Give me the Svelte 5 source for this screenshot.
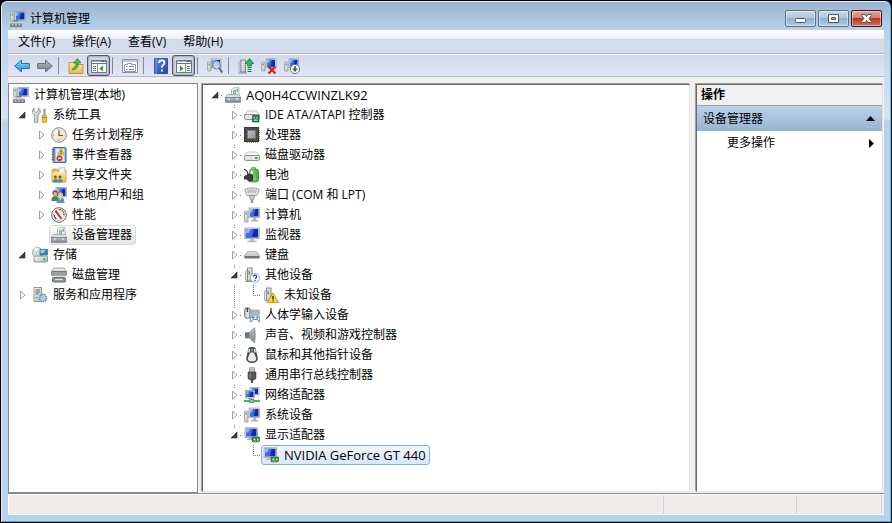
<script>
    const menus = ["文件(F)", "操作(A)", "查看(V)", "帮助(H)"];

    const tools = [
        [
            { icon: "back", label: "后退" },
            { icon: "forward", label: "前进" },
        ],
        [
            { icon: "upfolder", label: "上一级" },
            { icon: "consoletree", label: "显示控制台树", pressed: true },
        ],
        [{ icon: "properties", label: "属性" }],
        [
            { icon: "help", label: "帮助" },
            { icon: "actionpane", label: "显示操作窗格", pressed: true },
        ],
        [{ icon: "scan", label: "扫描检测硬件改动" }],
        [
            { icon: "update", label: "更新驱动程序" },
            { icon: "uninstall", label: "卸载" },
            { icon: "disable", label: "禁用" },
        ],
    ];

    let consoleTree = $state([
        {
            name: "计算机管理(本地)",
            icon: "console",
            open: true,
            children: [
                {
                    name: "系统工具",
                    icon: "tools",
                    open: true,
                    children: [
                        { name: "任务计划程序", icon: "clock", children: [] },
                        { name: "事件查看器", icon: "events", children: [] },
                        { name: "共享文件夹", icon: "shared", children: [] },
                        { name: "本地用户和组", icon: "users", children: [] },
                        { name: "性能", icon: "gauge", children: [] },
                        { name: "设备管理器", icon: "device" },
                    ],
                },
                {
                    name: "存储",
                    icon: "storage",
                    open: true,
                    children: [{ name: "磁盘管理", icon: "diskmgmt" }],
                },
                { name: "服务和应用程序", icon: "services", children: [] },
            ],
        },
    ]);

    let deviceTree = $state([
        {
            name: "AQ0H4CCWINZLK92",
            icon: "device",
            open: true,
            children: [
                { name: "IDE ATA/ATAPI 控制器", icon: "ide", children: [] },
                { name: "处理器", icon: "cpu", children: [] },
                { name: "磁盘驱动器", icon: "disk", children: [] },
                { name: "电池", icon: "battery", children: [] },
                { name: "端口 (COM 和 LPT)", icon: "port", children: [] },
                { name: "计算机", icon: "computer", children: [] },
                { name: "监视器", icon: "monitor", children: [] },
                { name: "键盘", icon: "keyboard", children: [] },
                {
                    name: "其他设备",
                    icon: "unknown",
                    open: true,
                    children: [{ name: "未知设备", icon: "warning" }],
                },
                { name: "人体学输入设备", icon: "hid", children: [] },
                { name: "声音、视频和游戏控制器", icon: "speaker", children: [] },
                { name: "鼠标和其他指针设备", icon: "mouse", children: [] },
                { name: "通用串行总线控制器", icon: "usb", children: [] },
                { name: "网络适配器", icon: "network", children: [] },
                { name: "系统设备", icon: "computer", children: [] },
                {
                    name: "显示适配器",
                    icon: "display",
                    open: true,
                    children: [{ name: "NVIDIA GeForce GT 440", icon: "display" }],
                },
            ],
        },
    ]);

    let selected = $state({
        console: "设备管理器",
        device: "NVIDIA GeForce GT 440",
    });

    // names without any Chinese are set one size up, so both scripts look alike
    const isLatin = (name) => /^[\x20-\x7e]+$/.test(name);
</script>

{#snippet screen(x, y, w, h)}
    <rect {x} {y} width={w} height={h} fill="#dfe4e8" stroke="#8d979f" stroke-width=".7" />
    <rect x={x + 1} y={y + 1} width={w - 2} height={h - 2} fill="#1029b4" />
    <path d="M{x + 1} {y + 1}h{(w - 2) * 0.65}l-2 {h - 2}h-{(w - 2) * 0.65 - 2}z" fill="#3f6be0" />
    <path d="M{x + 1} {y + 1}h{(w - 2) * 0.4}l-2 {(h - 2) / 2}h-{(w - 2) * 0.4 - 2}z" fill="#8fb4f5" />
{/snippet}

{#snippet tower(x, y, h)}
    <rect {x} {y} width="3.6" height={h} rx=".6" fill="url(#steel)" stroke="#8b9497" stroke-width=".7" />
    <rect x={x + 1} y={y + 1.5} width="1.4" height="2" fill="#3cc03a" />
{/snippet}

{#snippet drive(y)}
    <path d="M3.5 {y}h9l3 3.5H.5z" fill="#f4f5f5" stroke="#a9adae" stroke-width=".7" />
    <rect x=".5" y={y + 3.5} width="15" height="5" rx="1.6" fill="#e3e5e5" stroke="#85898a" stroke-width=".9" />
    <rect x="11" y={y + 5} width="2.6" height="2" fill="#2fbf2f" />
{/snippet}

{#snippet card()}
    <rect x="8" y="10" width="7.5" height="4.6" fill="#2f8a55" stroke="#1a6138" stroke-width=".6" />
    <path d="M9.5 11.5h2v2h-2zM13 11.5h1.5v2H13z" fill="#b9ddb9" />
    <path d="M9 15.2h5" stroke="#d7b33c" />
{/snippet}

{#snippet icon(name)}
    <svg class="icon" viewBox="0 0 16 16" width="16" height="16" fill="none" aria-hidden="true">
        {#if name === "console"}
            {@render tower(0.5, 1, 9)}
            {@render screen(5, 0.5, 10.5, 9)}
            <path d="M0 11h12v5H0z" fill="#767b7e" />
            <path d="M0 11h12v1.6H0z" fill="#c9cfd2" />
            <path d="M1.5 14h2M5 14h2M8.5 14h2" stroke="#e9edee" />
            <path d="M4 10.5V9.8h4v.7" stroke="#666" />
        {:else if name === "tools"}
            <path d="M2 1v3.4L4.2 5.4 6.2 4.4V1l2 1.8v3L6 8v7.2q-2 1.4-3.6 0V8L.6 5.8v-3z" fill="url(#steel)" stroke="#6f777a" stroke-width=".7" />
            <path d="M11.8 2h1.4v7h-1.4z" fill="#a5a9ab" stroke="#777" stroke-width=".5" />
            <rect x="10.3" y="8" width="4.4" height="7.5" rx="1.6" fill="#f8c22a" stroke="#b27c12" stroke-width=".7" />
            <path d="M10.6 10.5h3.8" stroke="#b27c12" />
        {:else if name === "clock"}
            <circle cx="8" cy="8" r="7.3" fill="#f6f3e8" stroke="#85888a" />
            <circle cx="8" cy="8" r="5.8" fill="url(#cream)" stroke="#d8d6cc" stroke-width=".6" />
            <path d="M8 3.5V8.5h4" stroke="#4d586b" stroke-width="1.2" />
            <path d="M8 2.4v1M8 12.6v1M2.4 8h1" stroke="#888" />
        {:else if name === "events"}
            <rect x="2" y=".5" width="13" height="15" rx=".8" fill="#7ba7d9" stroke="#3d6391" />
            <path d="M4.5 1.5h9v13h-9z" fill="#dbe9f8" />
            <path d="M.8 2.5h3M.8 5h3M.8 7.5h3M.8 10h3M.8 12.5h3" stroke="#58657a" />
            <path d="M10 1.5l3.2 5.8H6.8z" fill="#ffd52e" stroke="#a9820a" stroke-width=".6" />
            <path d="M10 3.5v2M10 6v.8" stroke="#222" stroke-width=".9" />
            <circle cx="8.5" cy="11.2" r="3" fill="#d9322b" />
            <path d="M7 11.2h3" stroke="#fff" stroke-width="1.2" />
        {:else if name === "shared"}
            <path d="M1 3.5L2 2h4l1 1.5h8V15H1z" fill="#e8bd4c" stroke="#b58a24" stroke-width=".7" />
            <path d="M8 .8h6v5H8z" fill="#eff7ff" stroke="#7ea4c9" stroke-width=".6" />
            <path d="M1.5 5h13v10h-13z" fill="url(#folder)" />
            <circle cx="4.4" cy="10" r="1.4" fill="#80502a" /><circle cx="9" cy="10" r="1.4" fill="#80502a" />
            <path d="M2 15.500q0-3.800 2.500-3.800t2.500 3.800z" fill="#3a9b67" />
            <path d="M6.700 15.500q0-3.800 2.500-3.800t2.500 3.800z" fill="#4090bd" />
        {:else if name === "users"}
            {@render screen(5, 0.5, 10.5, 9.5)}
            <path d="M10 11h3v2h-3z" fill="#b6bcc0" />
            <circle cx="4" cy="5.8" r="2.6" fill="#7b4d2d" /><circle cx="4.3" cy="6.6" r="1.7" fill="#e8b68c" />
            <path d="M.3 14q0-5 3.7-5t3.8 5z" fill="#438b54" />
            <circle cx="9.5" cy="7.8" r="2.6" fill="#e5bd55" /><circle cx="9.5" cy="8.7" r="1.7" fill="#f2c79e" />
            <path d="M5.5 16q0-5 4-5t4 5z" fill="#5795c6" />
            <path d="M8.7 11.2l.8 2.3.8-2.3z" fill="#fff" />
        {:else if name === "gauge"}
            <circle cx="8" cy="8" r="7.3" fill="#fff" stroke="#5c6063" />
            <circle cx="8" cy="8" r="5.5" stroke="#a9adb0" stroke-width=".8" />
            <path d="M4.5 3.8l6 8" stroke="#d22b20" stroke-width="2" />
            <path d="M8.2 2.5q5 .4 4.5 5.8" stroke="#c7392f" stroke-width="1.4" stroke-dasharray="1.5 .8" />
            <path d="M3.2 8q.3 3 2.3 4.2" stroke="#555" stroke-width="1.2" />
        {:else if name === "device"}
            <path d="M6.500 8.500V2.500L9 .7h5v7.800z" fill="#f4f6f6" stroke="#98a1a3" stroke-width=".7" />
            <path d="M8.500 3.500h2v3.500h-2z" fill="#c3ccd0" stroke="#6f7d80" stroke-width=".6" />
            <path d="M11.500 1.800h1.300v3h-1.300z" fill="#3bb540" />
            <path d="M2.500 7.500h11.500l1.700 3H.3z" fill="#dbe1e4" stroke="#7d898d" stroke-width=".6" />
            <path d="M.4 10.500h15.200v4.800H.4z" fill="url(#slate)" stroke="#68757a" stroke-width=".7" />
            <path d="M4 11.300v2M12 11.300v2" stroke="#f0f3f4" stroke-width="1.200" />
        {:else if name === "storage"}
            <circle cx="5.5" cy="5.5" r="5" fill="#e0e5e8" stroke="#858c90" stroke-width=".8" />
            <path d="M5.5 5.5L2 2.2A5 5 0 016 .8z" fill="#fff" />
            <circle cx="5.5" cy="5.5" r="1.5" fill="#fff" stroke="#888" stroke-width=".6" />
            <rect x="8" y="2.5" width="7.5" height="5.5" fill="#2489c7" stroke="#4a6b80" stroke-width=".7" />
            <path d="M8.5 3h5l-2 3h-3z" fill="#8fd0f0" />
            <rect x="2" y="9" width="13.5" height="6" rx="1" fill="url(#steel)" stroke="#777c7e" stroke-width=".8" />
            <rect x="11" y="11.5" width="2.6" height="1.8" fill="#2fbf2f" />
        {:else if name === "diskmgmt"}
            <path d="M3 1h10l2.5 3.5H.5z" fill="#e5e6e6" stroke="#858788" stroke-width=".7" />
            <rect x=".5" y="4.5" width="15" height="4" rx="1" fill="#9da1a2" stroke="#66696a" stroke-width=".8" />
            <rect x="12" y="5.6" width="2" height="1.4" fill="#4fe04f" />
            <path d="M2.5 8.5h11v2h-11z" fill="#e0e2e2" />
            <rect x="1.5" y="10.5" width="13" height="4.6" rx="1" fill="#8c9091" stroke="#5c6061" stroke-width=".8" />
            <path d="M4 12.5h8" stroke="#e2e4e4" stroke-width="1.2" />
        {:else if name === "services"}
            <rect x="2" y=".5" width="7.5" height="14" fill="url(#steel)" stroke="#7c8588" stroke-width=".8" />
            <path d="M3.5 3h4.5M3.5 5h4.5M3.5 7h3" stroke="#59656b" />
            <rect x="3.4" y="10" width="1.5" height="1.5" fill="#3cc03a" />
            <circle cx="11" cy="11" r="3.6" fill="#c2dbef" stroke="#638fb5" stroke-width="1.6" stroke-dasharray="1.4 .8" />
            <circle cx="11" cy="11" r="3" fill="#bcd6ec" stroke="#6e96b8" stroke-width=".6" />
            <circle cx="11" cy="11" r="1.2" fill="#fff" stroke="#638fb5" stroke-width=".6" />
        {:else if name === "ide"}
            {@render drive(4)}
            <path d="M8.500 8.500H15V15H8.500z" fill="#1d7b4a" stroke="#0f5731" stroke-width=".6" />
            <path d="M9.700 10h1.300v1.300H9.700zM12.400 10h1.300v1.300h-1.300zM10 12.600h3.500v1.200H10z" fill="#d6eed6" />
        {:else if name === "disk"}
            {@render drive(5)}
        {:else if name === "cpu"}
            <path d="M15.300 3v12M3 15.300h12" stroke="#b3873a" stroke-width="1.300" stroke-dasharray="1 1" />
            <rect x=".5" y=".5" width="14" height="14" fill="#4a4a4a" stroke="#3a3a3a" />
            <rect x="3.500" y="3.500" width="8" height="8" fill="url(#chip)" stroke="#777" stroke-width=".6" />
        {:else if name === "battery"}
            <path d="M7.5.5h4v2h-4z" fill="#d3d7d3" stroke="#676e67" stroke-width=".6" />
            <rect x="5.500" y="2" width="9" height="13" rx="2.500" fill="url(#green)" stroke="#3f9142" stroke-width=".8" />
            <path d="M8 4v3" stroke="#eaffe6" stroke-width="2" />
            <path d="M0 2.500q3.500.500 4 5" stroke="#222" stroke-width="1.200" />
            <path d="M0 9.500l5-2.500 4 1.200v5L5 14.500 2.500 12H0z" fill="#3c3f3e" stroke="#151515" stroke-width=".6" />
            <path d="M9 9h3M9 12h3" stroke="#d5c06c" stroke-width="1.200" />
        {:else if name === "port"}
            <path d="M.7 2.5Q8-.8 15.3 2.5L13 8.3H3z" fill="#e9ecee" stroke="#7f878a" stroke-width=".8" />
            <path d="M3 3.500Q8 1.700 13 3.500L12 6H4z" fill="#a5adb1" />
            <path d="M4.5 4h7M5.5 5.4h5" stroke="#f6f8f8" stroke-dasharray="1 1" />
            <path d="M5 8.5h6l-1 3.8H6z" fill="#c3cacd" stroke="#858e92" stroke-width=".6" />
            <path d="M8 12.4V16" stroke="#8f989c" stroke-width="2.4" />
        {:else if name === "computer"}
            {@render tower(0.5, 4, 11)}
            {@render screen(5, 1, 10.5, 9.5)}
            <path d="M9 11h3v2h2v1.6H7V13h2z" fill="#aab1b5" />
        {:else if name === "monitor"}
            {@render screen(0.8, 1, 14.4, 10.5)}
            <path d="M6 12h4v1.6h2.5v1.6h-9v-1.6H6z" fill="#b6bcc0" />
        {:else if name === "keyboard"}
            <path d="M3.5 4.500h9l3.200 4.200v1.500q0 1.300-1.500 1.300H1.800Q.3 11.500.3 10.200V8.700z" fill="#6d7275" />
            <path d="M3.700 5h8.600l2.700 4H1z" fill="#eceeee" />
            <path d="M3.600 6.100h9M2.800 7.400h11M2 8.700h12" stroke="#92979a" stroke-width=".7" stroke-dasharray="1 .7" />
        {:else if name === "unknown" || name === "warning"}
            <path d="M1.500 4.500l2-2v11l-2-.5z" fill="#eee" stroke="#888" stroke-width=".7" />
            <rect x="3.500" y="1" width="4.600" height="13" fill="url(#steel)" stroke="#707678" stroke-width=".8" />
            <path d="M5.200 3.500v4" stroke="#39b43c" stroke-width="1.400" />
            {#if name === "unknown"}
                <path d="M1 14.500h9" stroke="#8b9092" />
                <circle cx="11" cy="10.800" r="4.500" fill="#fff" stroke="#7d96b5" stroke-width=".8" />
                <path d="M9.500 9.600q.2-1.500 1.600-1.500t1.500 1.300-1.500 2.200M11 12.700v1.200" stroke="#1743b0" stroke-width="1.300" />
            {:else}
                <path d="M10 6l5.700 9.600H4.300z" fill="#ffd91f" stroke="#b88a00" stroke-width=".8" />
                <path d="M10 9v3.500M10 13.400v1.200" stroke="#222" stroke-width="1.300" />
            {/if}
        {:else if name === "hid"}
            <rect x=".8" y=".8" width="5.200" height="10.500" rx="2.200" fill="#e2e4e5" stroke="#4d5153" stroke-width=".9" />
            <path d="M3.400 1v4" stroke="#3d4042" stroke-width="1.400" />
            <path d="M7 3h8l1 4H7z" fill="#cdd1d3" stroke="#83898c" stroke-width=".6" />
            <path d="M7.500 4.300h7.500M7.500 5.800h8" stroke="#777" stroke-width=".7" stroke-dasharray="1 .6" />
            <path d="M8 8h6.500q1.500 2 1.500 6.500-1.300 1.500-2.500-2h-4.500q-1.500 3.500-3 2Q6 10 8 8z" fill="#dce7ef" stroke="#557890" stroke-width=".8" />
            <path d="M9 9v3M7.600 10.500h3" stroke="#337fae" stroke-width=".9" />
            <circle cx="13.200" cy="10.500" r="1" fill="#337fae" />
        {:else if name === "speaker"}
            <path d="M1.500 5.800h3.500v5H1.500z" fill="#6f787e" stroke="#4c5358" stroke-width=".7" />
            <path d="M5 5.800L10.500.8v15L5 10.800z" fill="url(#slate)" stroke="#7c848a" stroke-width=".7" />
            <path d="M10.500.8q2.200 7.500 0 15z" fill="#d6dadd" stroke="#858b90" stroke-width=".6" />
        {:else if name === "mouse"}
            <path d="M5 1Q8-.3 11 1l2.300 10q.3 4.500-5.300 4.500T2.700 11z" fill="#45494b" stroke="#242729" stroke-width=".7" />
            <path d="M6 6Q8 4.600 10 6l2.200 5q.3 3.600-4.200 3.600T3.800 11z" fill="#e7e9ea" />
            <path d="M5.600 1.800L4.800 5.500M10.400 1.800l.8 3.700" stroke="#e5e8e9" stroke-width="1.500" />
            <path d="M8 1.500v3" stroke="#d8d8d8" />
        {:else if name === "usb"}
            <path d="M5.5.8h5V5h-5z" fill="#e7e9ea" stroke="#7f8385" stroke-width=".8" />
            <path d="M7 2.200v1.200M9 2.200v1.200" stroke="#555" />
            <path d="M4 5h8v5.500q0 2-2.500 2.500h-3Q4 12.500 4 10.500z" fill="#535759" stroke="#333637" stroke-width=".6" />
            <path d="M6 6v5" stroke="#8f9496" />
            <path d="M8 13v3" stroke="#4c5052" stroke-width="2" />
        {:else if name === "network"}
            {@render screen(6, 0.5, 9, 7.5)}
            {@render screen(1.5, 3.5, 9, 7.5)}
            <path d="M4 11.500h4" stroke="#a6adb1" stroke-width="1.300" />
            <path d="M0 14h16" stroke="#32a85c" stroke-width="1.800" />
            <path d="M5.500 12.500h4.500v3H5.500z" fill="#79d594" stroke="#20854a" stroke-width=".7" />
        {:else if name === "display"}
            {@render screen(1, 0.8, 12.5, 9.5)}
            <path d="M4 11h4v2H3v-1h1z" fill="#b6bcc0" />
            {@render card()}
        {:else if name === "back"}
            <path d="M.7 8L7.500 2v3.500h7.800v5H7.500V14z" fill="url(#sky)" stroke="#1b6499" stroke-width=".9" />
        {:else if name === "forward"}
            <path d="M15.300 8L8.500 2v3.500H.7v5h7.800V14z" fill="url(#gray)" stroke="#626a72" stroke-width=".9" />
        {:else if name === "upfolder"}
            <path d="M1 4.500h5l1.500 2H15v9H1z" fill="url(#folder)" stroke="#b8862c" stroke-width=".8" />
            <path d="M4 11q4-2 4-6H5.500l4-4.500 3.500 4.500h-2.500q0 6-6 7z" fill="#4abb3b" stroke="#27801d" stroke-width=".6" />
        {:else if name === "consoletree" || name === "actionpane"}
            <path d="M.5 2.500h15v12H.5z" fill="#f7f8fa" stroke="#6b7484" />
            <path d="M1 3.500h14" stroke="#aab2c1" />
            <path d="M10.500 3.500h4" stroke="#4d5666" stroke-dasharray="1 .5" />
            <path d="M1 5.500h14" stroke="#6b7484" />
            {#if name === "consoletree"}
                <path d="M6.500 6v8" stroke="#8a92a0" />
                <path d="M2 8.500h3M2 10.500h3M2 12.500h3" stroke="#5d6470" stroke-dasharray="1 .5 2 0" />
                <path d="M12 7.500v6L8.500 10.500z" fill="#25a32a" />
            {:else}
                <path d="M9.500 6v8" stroke="#8a92a0" />
                <path d="M11 8.500h3M11 10.500h3M11 12.500h3" stroke="#4d79a8" />
                <path d="M4 7.500v6l3.500-3z" fill="#25a32a" />
            {/if}
        {:else if name === "properties"}
            <path d="M.5 1.500h15v13H.5z" fill="#fcfcfd" stroke="#8a8f99" />
            <path d="M1 3h14" stroke="#c5cad6" stroke-width="2" />
            <path d="M2.500 6.500h3v-1h4v1h4v7h-11z" stroke="#8b98b0" />
            <path d="M4 8.500h1.500M4 11.500h1.500" stroke="#3d74b8" />
            <path d="M7 8.500h5M7 11.500h5" stroke="#7f8693" />
        {:else if name === "help"}
            <rect x="1.500" y="0" width="13" height="16" rx=".8" fill="url(#navy)" stroke="#1f3f93" stroke-width=".8" />
            <path d="M3 0v16" stroke="#7b9be3" />
            <path d="M6 5q.2-2.600 2.800-2.600t2.600 2.400q0 1.500-1.500 2.400-1.100.8-1 2.500M8.900 11.500v2" stroke="#fff" stroke-width="1.900" />
        {:else if name === "scan"}
            {@render tower(0.5, 4, 9)}
            {@render screen(4.5, 1, 9.5, 8.5)}
            <circle cx="9.500" cy="7" r="4" fill="#cfe5f5" fill-opacity=".85" stroke="#6e7f8e" />
            <path d="M12.200 10l3 4.500" stroke="#526473" stroke-width="2" />
        {:else if name === "update"}
            <path d="M1 4.500l2-2v11l-2-.5z" fill="#eee" stroke="#888" stroke-width=".7" />
            <rect x="3" y="2" width="4.600" height="12" fill="url(#steel)" stroke="#707678" stroke-width=".8" />
            <path d="M0 15h9" stroke="#83898b" />
            <path d="M11.500.5l4.300 5h-2.300V8h-4V5.500H7.200z" fill="#36b35c" stroke="#14723a" stroke-width=".7" />
            <path d="M9.500 9.500h4M9.500 11.500h4M9.500 13.500h4" stroke="#15763c" stroke-width="1.200" />
        {:else if name === "uninstall"}
            {@render tower(0.5, 4, 9)}
            {@render screen(5, 0.8, 10, 9)}
            <path d="M7.500 8.500l7 7M14.500 8.500l-7 7" stroke="#d81d19" stroke-width="2.200" />
        {:else if name === "disable"}
            {@render tower(0.5, 4, 9)}
            {@render screen(5, 0.8, 9.5, 8.5)}
            <circle cx="11" cy="11" r="4.600" fill="#f4f5f6" stroke="#666c72" stroke-width=".9" />
            <path d="M10.200 8h1.600v2.500h2L11 14l-2.800-3.500h2z" fill="#4f555b" />
        {/if}
    </svg>
{/snippet}

{#snippet branch(nodes, tree, depth)}
    {#each nodes as node, i}
        {@const last = i === nodes.length - 1}
        {@const lines = tree === "device"}
        <li role="treeitem" aria-selected={selected[tree] === node.name} aria-expanded={node.children ? !!node.open : undefined}>
            <div class="row">
                {#if lines || depth > 0}
                    <button class="twist" tabindex="-1" aria-label={node.name} onclick={() => (node.open = !node.open)}>
                        <svg viewBox="0 0 19 20" width="19" height="20" aria-hidden="true">
                            {#if lines}
                                {#if depth > 0}
                                    <path class="dots" d="M11.5 0V{last ? 10 : 20}" />
                                {/if}
                                <path class="dots" d="M{depth > 0 && !node.children ? 11 : 17} 10.5H20" />
                            {/if}
                            {#if node.children}
                                {#if lines}<path d="M7 4h9v15H7z" fill="#fff" />{/if}
                                {#if node.open}
                                    <path d="M14 7v6H8z" fill="#404040" stroke="#202020" stroke-width=".6" />
                                {:else}
                                    <path d="M9.5 6v8L14 10z" fill="#fff" stroke="#a0a0a0" />
                                {/if}
                            {/if}
                        </svg>
                    </button>
                {/if}
                <button
                    class="node"
                    class:latin={isLatin(node.name)}
                    class:selected={selected[tree] === node.name}
                    onclick={() => (selected[tree] = node.name)}
                >
                    {@render icon(node.icon)}
                    <span>{node.name}</span>
                </button>
            </div>
            {#if node.open && node.children.length}
                <ul role="group" class:flush={!lines && depth === 0} class:rail={lines && depth > 0 && !last}>
                    {@render branch(node.children, tree, depth + 1)}
                </ul>
            {/if}
        </li>
    {/each}
{/snippet}

<svg class="defs" width="0" height="0" aria-hidden="true">
    <linearGradient id="steel" x1="0" y1="0" x2="1" y2="1"><stop offset="0" stop-color="#f7f8f8" /><stop offset="1" stop-color="#b3babd" /></linearGradient>
    <linearGradient id="chip" x1="0" y1="0" x2="1" y2="1"><stop offset="0" stop-color="#c9c9c9" /><stop offset="1" stop-color="#8a8a8a" /></linearGradient>
    <linearGradient id="slate" x1="0" y1="0" x2="0" y2="1"><stop offset="0" stop-color="#b5bfc4" /><stop offset="1" stop-color="#7b8990" /></linearGradient>
    <linearGradient id="gray" x1="0" y1="0" x2="0" y2="1"><stop offset="0" stop-color="#b4b9be" /><stop offset="1" stop-color="#767d85" /></linearGradient>
    <linearGradient id="sky" x1="0" y1="0" x2="0" y2="1"><stop offset="0" stop-color="#8fdcfb" /><stop offset="1" stop-color="#1f93d8" /></linearGradient>
    <linearGradient id="navy" x1="0" y1="0" x2="1" y2="1"><stop offset="0" stop-color="#5a84dc" /><stop offset="1" stop-color="#2347a8" /></linearGradient>
    <linearGradient id="folder" x1="0" y1="0" x2="0" y2="1"><stop offset="0" stop-color="#fdeaa4" /><stop offset="1" stop-color="#e7b84b" /></linearGradient>
    <linearGradient id="green" x1="0" y1="0" x2="1" y2="0"><stop offset="0" stop-color="#8be87c" /><stop offset="1" stop-color="#35b03c" /></linearGradient>
    <linearGradient id="cream" x1="0" y1="0" x2="1" y2="1"><stop offset="0" stop-color="#fffef8" /><stop offset="1" stop-color="#eed9a0" /></linearGradient>
</svg>

<div class="window">
    <header class="titlebar">
        {@render icon("console")}
        <h1>计算机管理</h1>
        <div class="caption">
            <button aria-label="最小化">
                <svg viewBox="0 0 29 15" width="29" height="15"><rect x="9.5" y="7.5" width="10" height="4" rx="1" fill="#fff" stroke="#535666" /></svg>
            </button>
            <button aria-label="最大化">
                <svg viewBox="0 0 29 15" width="29" height="15">
                    <path d="M9.5 3.5h10v8h-10zM12.5 6.5v2h4v-2z" fill="#fff" fill-rule="evenodd" stroke="#535666" />
                </svg>
            </button>
            <button class="close" aria-label="关闭">
                <svg viewBox="0 0 29 15" width="29" height="15">
                    <path d="M9.5 3.500h3.500l1.500 2 1.500-2h3.500v1L17 7.500l2.500 3v1H16l-1.500-2-1.500 2H9.500v-1l2.500-3-2.500-3z" fill="#fff" stroke="#535666" />
                </svg>
            </button>
        </div>
    </header>

    <div class="client">
        <nav class="menubar">
            {#each menus as menu}
                <button>{menu}</button>
            {/each}
        </nav>

        <div class="toolbar" role="toolbar">
            {#each tools as group, i}
                {#if i > 0}<span class="sep"></span>{/if}
                {#each group as tool}
                    <button class:pressed={tool.pressed} aria-label={tool.label}>{@render icon(tool.icon)}</button>
                {/each}
            {/each}
        </div>

        <main>
            <section class="pane console">
                <ul role="tree">{@render branch(consoleTree, "console", 0)}</ul>
            </section>
            <section class="pane sunken devices">
                <ul role="tree">{@render branch(deviceTree, "device", 0)}</ul>
            </section>
            <aside class="pane sunken actions">
                <h2>操作</h2>
                <button class="group">
                    设备管理器
                    <svg viewBox="0 0 9 5" width="9" height="5" aria-hidden="true"><path d="M0 5L4.5 0 9 5z" /></svg>
                </button>
                <button class="more">
                    更多操作
                    <svg viewBox="0 0 5 9" width="5" height="9" aria-hidden="true"><path d="M0 0l5 4.500L0 9z" /></svg>
                </button>
            </aside>
        </main>

        <footer class="statusbar">
            <span class="message"></span>
            <span class="panel wide"></span>
            <span class="panel"></span>
        </footer>
    </div>
</div>

<style>
    :global(body) {
        background: #000;
    }

    :global(#app) {
        padding: 1px 0;
    }

    .defs {
        position: absolute;
    }

    .window {
        box-sizing: border-box;
        min-height: calc(100vh - 2px);
        margin: 0 1px;
        display: flex;
        flex-direction: column;
        padding: 0 6px 6px;
        border: 1px solid #e6f0fa;
        border-right-color: #45cbe8;
        border-bottom-color: #2bb5d0;
        border-radius: 6px 6px 0 0;
        background: linear-gradient(#99b4d1, #b9d1ea 28px, #d6e4f4 116px, #b9d1ea 120px);
        color: #000;
        font: 12px/20px "Open Sans", "Noto Sans CJK SC", sans-serif;
    }

    button {
        margin: 0;
        padding: 0;
        border: none;
        background: none;
        color: inherit;
        font: inherit;
        text-align: left;
    }

    .icon {
        display: block;
        flex: none;
    }

    /* Title bar */
    .titlebar {
        display: flex;
        align-items: center;
        gap: 4px;
        height: 28px;
        padding: 5px 2px 0;
        box-sizing: border-box;
    }

    h1 {
        flex: 1;
        margin: 0;
        font-size: 12px;
        font-weight: 400;
    }

    .caption {
        display: flex;
        gap: 2px;
    }

    .caption button {
        border: 1px solid #5f7187;
        border-radius: 2px;
        background: linear-gradient(#c4d7eb, #afc6df 50%, #93b0cf 50%, #b3cce5);
        box-shadow: inset 0 0 0 1px rgba(255, 255, 255, 0.45);
    }

    .caption svg {
        display: block;
    }

    .caption .close {
        border-color: #4c1018;
        background: linear-gradient(#e3a397, #d37d6d 50%, #b6371f 50%, #d57358);
    }

    /* Menu and toolbar */
    .client {
        flex: 1;
        display: flex;
        flex-direction: column;
        background: #f0f0f0;
    }

    .menubar {
        display: flex;
        align-items: center;
        gap: 1px;
        height: 23px;
        padding-left: 2px;
        border-bottom: 1px solid #b3b5bd;
        background: linear-gradient(#fff, #e9eef6 9px, #d4dbed 9px);
    }

    .menubar button {
        padding: 0 8px;
    }

    .toolbar {
        display: flex;
        align-items: center;
        height: 21px;
        padding-left: 2px;
        border-top: 1px solid #f4f6fb;
        border-bottom: 1px solid #b4bacd;
        background: linear-gradient(#d3d9ec, #e2e7f7);
    }

    .toolbar button {
        display: flex;
        align-items: center;
        justify-content: center;
        box-sizing: border-box;
        width: 23px;
        height: 21px;
    }

    .toolbar .pressed {
        border: 1px solid #4f5664;
        border-radius: 3px;
        background: #d5d9e2;
        box-shadow: inset 0 0 2px 1px #a4aab6;
    }

    .sep {
        width: 1px;
        height: 17px;
        margin: 0 5px 0 2px;
        background: #868b98;
    }

    /* Panes */
    main {
        flex: 1;
        display: flex;
        padding: 6px 1px 0 0;
    }

    .pane {
        box-sizing: border-box;
        background: #fff;
    }

    .console {
        width: 190px;
        margin-right: 3px;
        padding: 1px 2px;
        border: 1px solid #828790;
    }

    .sunken {
        margin: 1px 0 1px 1px;
        border: 1px solid;
        border-color: #696969 #e3e3e3 #e3e3e3 #696969;
        box-shadow: -1px -1px #a0a0a0;
    }

    .devices {
        flex: 1;
        margin-right: 5px;
        padding-left: 1px;
    }

    .actions {
        width: 187px;
    }

    /* Trees */
    ul {
        margin: 0;
        padding: 0;
        list-style: none;
    }

    ul ul {
        padding-left: 19px;
    }

    ul .flush {
        padding-left: 0;
    }

    .rail {
        background: repeating-linear-gradient(#909090 0 1px, #fff 1px 2px) 11px 0 / 1px 100% no-repeat;
    }

    .row {
        display: flex;
        height: 20px;
    }

    .twist svg {
        display: block;
    }

    .dots {
        stroke: #808080;
        stroke-dasharray: 1 1;
    }

    .node {
        display: flex;
        align-items: center;
        gap: 5px;
        box-sizing: border-box;
        height: 20px;
        padding: 0 3px 0 1px;
        border: 1px solid transparent;
        border-radius: 3px;
        line-height: 18px;
        white-space: nowrap;
    }

    .latin {
        font-size: 13px;
    }

    .console .selected {
        border-color: #d9d9d9;
        background: linear-gradient(#fafafa, #e5e5e5);
    }

    .devices .selected {
        border-color: #84acdd;
        background: linear-gradient(#f2f7fd, #d9e7f9);
    }

    /* Actions */
    h2 {
        margin: 0;
        padding-left: 4px;
        border-bottom: 1px solid #a0a0a0;
        background: #f0f0f0;
        font-size: 12px;
        font-weight: 700;
    }

    .group,
    .more {
        display: flex;
        align-items: center;
        justify-content: space-between;
        width: 100%;
        height: 25px;
        padding: 0 7px 0 6px;
    }

    .group {
        background: linear-gradient(#b9d1ea, #99b4d1);
    }

    .more {
        height: 24px;
        padding: 0 8px 0 30px;
    }

    /* Status bar */
    .statusbar {
        display: flex;
        height: 19px;
        margin-top: 1px;
        padding: 0 2px 0 0;
        border: solid #fff;
        border-width: 1px 0 1px 1px;
        background: #f0eceb;
        box-shadow: 0 -1px #8c8c8c;
    }

    .message {
        flex: 1;
    }

    .panel {
        width: 84px;
        border: solid #d5d3d3;
        border-width: 0 1px;
    }

    .wide {
        width: 132px;
        border-right: none;
    }
</style>
